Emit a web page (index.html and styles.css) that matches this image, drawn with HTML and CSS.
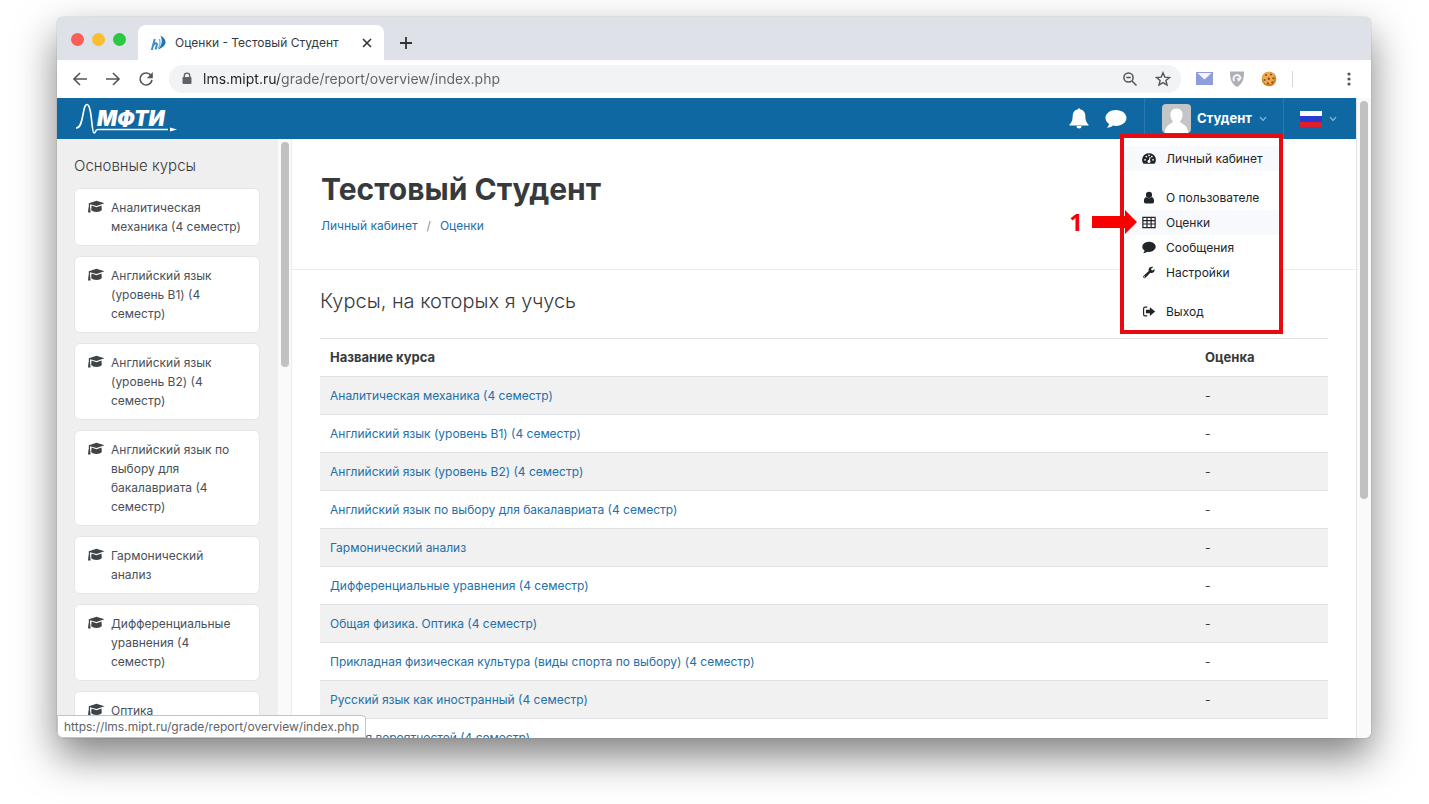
FILE: index.html
```html
<!DOCTYPE html>
<html lang="ru">
<head>
    <meta charset="UTF-8">
    <meta name="viewport" content="width=device-width, initial-scale=1.0">
    <title>Оценки - Тестовый Студент</title>
    <link rel="stylesheet" href="styles.css">
</head>
<body>
    <svg width="0" height="0" class="sprite" aria-hidden="true">
        <symbol id="cap" viewBox="0 0 18 14">
            <path d="M9.500.8 17.500 3.200 9.500 6 3 4.200V8H1.800V3.200z"/>
            <path d="M4.500 5.500 9.500 7.200l5-1.700.3 4.500c-1.500 2.500-9 2.500-10.600 0z"/>
            <path d="M1.500 7.500h1.600l.5 5H1z"/>
        </symbol>
        <symbol id="comment" viewBox="0 0 22 20">
            <path d="M11 1C5.200 1 .5 4.500.5 9c0 2.500 1.400 4.600 3.600 6.100-.3 1.500-1.100 2.700-2.300 3.700 2.400.1 4.700-.8 6.300-2.200.9.2 1.900.3 2.900.3 5.800 0 10.500-3.500 10.500-7.900S16.800 1 11 1z"/>
        </symbol>
        <symbol id="chevron" viewBox="0 0 8 6">
            <path d="M1 1l3 3.500L7 1" fill="none" stroke="currentColor" stroke-width="1.400"/>
        </symbol>
    </svg>

    <div class="window">
        <div class="tab-strip">
            <div class="lights">
                <span class="light light-red"></span>
                <span class="light light-yellow"></span>
                <span class="light light-green"></span>
            </div>
            <div class="tab">
                <svg class="favicon" viewBox="0 0 16 16" aria-hidden="true">
                    <path d="M4.800 4 1.800 15M3 10.500C5 7.500 7.500 7.500 6.800 10L5.600 14.500" fill="none" stroke="#3e8ec4" stroke-width="2"/>
                    <path d="M10.500.5c3 1.500 5.500 4.500 5 7.500-.6 3-3.500 5-7.500 6.500C12 10 12.800 6 10.500.5z" fill="#2274ae"/>
                    <path d="M9.300 4c1.300 3.500.8 6.500-1.200 9.500" fill="none" stroke="#7db9dc" stroke-width="1.500"/>
                </svg>
                <span class="tab-title">Оценки - Тестовый Студент</span>
                <button class="icon-button" aria-label="Закрыть вкладку">
                    <svg width="10" height="10" viewBox="0 0 10 10"><path d="M1 1l8 8M9 1L1 9" stroke="#333" stroke-width="1.600"/></svg>
                </button>
            </div>
            <button class="icon-button new-tab" aria-label="Новая вкладка">
                <svg width="14" height="14" viewBox="0 0 14 14"><path d="M7 1v12M1 7h12" stroke="#333" stroke-width="1.800"/></svg>
            </button>
        </div>

        <div class="toolbar">
            <div class="nav-buttons">
                <button class="icon-button" aria-label="Назад">
                    <svg width="16" height="14" viewBox="0 0 16 14"><path d="M15 7H2M8 1L2 7l6 6" fill="none" stroke="#555" stroke-width="1.600"/></svg>
                </button>
                <button class="icon-button" aria-label="Вперёд">
                    <svg width="16" height="14" viewBox="0 0 16 14"><path d="M1 7h13M8 1l6 6-6 6" fill="none" stroke="#555" stroke-width="1.600"/></svg>
                </button>
                <button class="icon-button" aria-label="Обновить">
                    <svg width="16" height="16" viewBox="0 0 16 16"><path d="M13 4.500A6 6 0 1 0 14 9" fill="none" stroke="#555" stroke-width="1.600"/><path d="M14.800 1v6.200H8.800z" fill="#555"/></svg>
                </button>
            </div>
            <div class="address">
                <svg width="10" height="13" viewBox="0 0 10 13"><path d="M2.300 6V3.800a2.700 2.700 0 0 1 5.400 0V6" fill="none" stroke="#5f6368" stroke-width="1.400"/><rect x=".5" y="5" width="9" height="7" rx="1" fill="#5f6368"/></svg>
                <input class="url" type="text" aria-label="Адрес" value="lms.mipt.ru/grade/report/overview/index.php">
                <button class="icon-button" aria-label="Масштаб">
                    <svg width="16" height="16" viewBox="0 0 16 16" fill="none" stroke="#555" stroke-width="1.500"><circle cx="6.500" cy="6.500" r="4.600"/><path d="M10 10l4.500 4.500M4.300 6.500h4.400"/></svg>
                </button>
                <button class="icon-button" aria-label="В закладки">
                    <svg width="16" height="16" viewBox="0 0 16 16"><path d="M8 1.800l1.800 4.300 4.700.4-3.600 3 1.100 4.600L8 11.600l-4 2.500 1.100-4.600-3.600-3 4.700-.4z" fill="none" stroke="#555" stroke-width="1.400"/></svg>
                </button>
            </div>
            <div class="extensions">
                <svg width="17" height="13" viewBox="0 0 17 13"><rect width="17" height="13" fill="#8f9edb"/><path d="M1.500 1h14l-7 6.500z" fill="#f4f6ff"/></svg>
                <svg width="16" height="16" viewBox="0 0 16 16"><path d="M1 .5h14c.2 7.500-1.500 12.500-7 15.500C2.500 13 .8 8 1 .5z" fill="#adb0b9"/><path d="M5.500 10A3.500 3.500 0 1 1 11.500 7.500" fill="none" stroke="#f3f4f6" stroke-width="2"/><path d="M7.500 7h5.200L9.500 11z" fill="#f3f4f6"/></svg>
                <svg width="16" height="16" viewBox="0 0 16 16"><circle cx="8" cy="8" r="7.300" fill="#d0802b"/><circle cx="7.500" cy="7" r="6.200" fill="#eda94c"/><g fill="#8a4e1d"><circle cx="5" cy="4" r="1"/><circle cx="10" cy="3.600" r="1"/><circle cx="12.300" cy="7.300" r="1.100"/><circle cx="7.800" cy="7.800" r="1.200"/><circle cx="3.600" cy="9" r="1.100"/><circle cx="7" cy="12.300" r="1.100"/><circle cx="11.300" cy="11.300" r="1.100"/></g></svg>
            </div>
            <button class="icon-button" aria-label="Меню браузера">
                <svg width="4" height="14" viewBox="0 0 4 14" fill="#555"><circle cx="2" cy="2" r="1.600"/><circle cx="2" cy="7" r="1.600"/><circle cx="2" cy="12" r="1.600"/></svg>
            </button>
        </div>

        <div class="viewport">
            <div class="page">
                <header class="navbar">
                    <a href="#" class="logo" aria-label="МФТИ">
                        <svg width="104" height="34" viewBox="0 0 104 34">
                            <path d="M0 26C8 27 6 2.500 11 2.500S15.500 31 18 31s.5-3.500 4-3.500h70" fill="none" stroke="#fff" stroke-width="1.600"/>
                            <path d="M94 25.500l7 2-7 2z" fill="#fff"/>
                            <text x="21" y="24" class="logo-text">МФТИ</text>
                        </svg>
                    </a>
                    <div class="nav-icons">
                        <button class="icon-button" aria-label="Уведомления">
                            <svg width="20" height="22" viewBox="0 0 20 22" fill="#fff"><path d="M9 1.300a1 1 0 0 1 2 0c3.500.7 5.200 3.200 5.300 6.200.1 4.500.7 6.800 3.200 9v1H.5v-1c2.500-2.200 3.100-4.500 3.200-9C3.800 4.500 5.500 2 9 1.300z"/><path d="M7.500 18h5a2.500 2.500 0 0 1-5 0z"/></svg>
                        </button>
                        <button class="icon-button" aria-label="Сообщения">
                            <svg width="22" height="20" fill="#fff"><use href="#comment"/></svg>
                        </button>
                    </div>
                    <div class="user">
                        <button class="user-button">
                            <svg class="avatar" width="29" height="29" viewBox="0 0 29 29"><rect width="29" height="29" rx="4" fill="#c4c5c6"/><path d="M14.500 4.500c4.500 0 6.500 3.500 6 7.500-.3 2.500-1.500 4.500-2.500 5.500.5 2.500 7.500 2 8.500 11.500h-24c1-9.500 8-9 8.500-11.500-1-1-2.200-3-2.500-5.500-.5-4 1.500-7.500 6-7.500z" fill="#fff"/></svg>
                            <span>Студент</span>
                            <svg class="chevron" width="8" height="6"><use href="#chevron"/></svg>
                        </button>
                        <ul class="menu">
                            <li><a href="#" class="current">
                                <svg viewBox="0 0 16 14"><path d="M8 1a7.500 7.500 0 0 0-6.300 12h12.600A7.500 7.500 0 0 0 8 1z"/><g fill="#fff"><circle cx="3.500" cy="8.500" r="1"/><circle cx="5" cy="4.800" r="1"/><circle cx="8" cy="3.300" r="1"/><circle cx="11.200" cy="4.800" r="1"/><circle cx="12.600" cy="8.500" r="1"/></g><path d="M8 10.500 9.300 5.500" stroke="#fff" stroke-width="1.200"/><circle cx="8" cy="10.500" r="1.700" fill="#fff"/></svg>
                                Личный кабинет</a></li>
                            <li class="divided"><a href="#">
                                <svg viewBox="0 0 16 14"><circle cx="8" cy="4" r="3.500"/><path d="M4.800 6.300C2.600 7 2.200 9 2.200 11.500c0 1.400.8 2.300 2.200 2.300h7.200c1.400 0 2.200-.9 2.200-2.300 0-2.500-.4-4.500-2.600-5.200-2 2-4.400 2-6.400 0z"/></svg>
                                О пользователе</a></li>
                            <li><a href="#" class="current">
                                <svg viewBox="0 0 16 14"><path d="M1 1.200h14v11.600H1zM1 4.900h14M1 8.700h14M5.700 1v12M10.400 1v12" class="line"/></svg>
                                Оценки</a></li>
                            <li><a href="#">
                                <svg viewBox="0 0 22 20"><use href="#comment"/></svg>
                                Сообщения</a></li>
                            <li><a href="#">
                                <svg viewBox="0 0 16 14"><path d="M14.500 3.200 12 4.700 10.600 4 10.500 2.400 13 .8C11 0 8.200 1 7.600 3.200c-.2.7-.1 1.400.1 2L1.600 11c-1 1.600.8 3.300 2.200 2.200L9.500 7.300c2.800.9 5.400-1.300 5-4.100zM2.800 12.700a.7.7 0 1 1 .1-1.400.7.7 0 0 1-.1 1.400z"/></svg>
                                Настройки</a></li>
                            <li class="divided"><a href="#">
                                <svg viewBox="0 0 16 14"><path d="M6 2H3.500Q1.800 2 1.800 4v6q0 2 1.700 2H6" class="line"/><path d="M4.500 5h4.500V2l6 5-6 5V9H4.500z"/></svg>
                                Выход</a></li>
                        </ul>
                        <div class="callout">
                            <span>1</span>
                            <svg width="46" height="24" viewBox="0 0 46 24" fill="#f90000"><path d="M0 6h33V0l12 12-12 12v-6H0z"/></svg>
                        </div>
                    </div>
                    <button class="language" aria-label="Русский">
                        <svg width="22" height="16" viewBox="0 0 22 16"><rect width="22" height="16" fill="#fff"/><rect y="5" width="22" height="6" fill="#2b3bd0"/><rect y="11" width="22" height="5" fill="#dd1f2c"/></svg>
                        <svg class="chevron" width="8" height="6"><use href="#chevron"/></svg>
                    </button>
                </header>

                <div class="columns">
                    <aside class="sidebar">
                        <h2>Основные курсы</h2>
                        <nav class="course-list">
                            <a href="#" class="course"><svg><use href="#cap"/></svg><span>Аналитическая механика (4 семестр)</span></a>
                            <a href="#" class="course"><svg><use href="#cap"/></svg><span>Английский язык (уровень B1) (4 семестр)</span></a>
                            <a href="#" class="course"><svg><use href="#cap"/></svg><span>Английский язык (уровень B2) (4 семестр)</span></a>
                            <a href="#" class="course"><svg><use href="#cap"/></svg><span>Английский язык по выбору для бакалавриата (4 семестр)</span></a>
                            <a href="#" class="course"><svg><use href="#cap"/></svg><span>Гармонический анализ</span></a>
                            <a href="#" class="course"><svg><use href="#cap"/></svg><span>Дифференциальные уравнения (4 семестр)</span></a>
                            <a href="#" class="course"><svg><use href="#cap"/></svg><span>Оптика</span></a>
                        </nav>
                    </aside>
                    <div class="scrollbar"><div class="thumb thumb-side"></div></div>

                    <main class="main">
                        <div class="page-header">
                            <h1>Тестовый Студент</h1>
                            <nav class="breadcrumb">
                                <a href="#">Личный кабинет</a>
                                <span>/</span>
                                <a href="#">Оценки</a>
                            </nav>
                        </div>
                        <section class="report">
                            <h2>Курсы, на которых я учусь</h2>
                            <table>
                                <thead>
                                    <tr><th>Название курса</th><th class="grade">Оценка</th></tr>
                                </thead>
                                <tbody>
                                    <tr><td><a href="#">Аналитическая механика (4 семестр)</a></td><td>-</td></tr>
                                    <tr><td><a href="#">Английский язык (уровень B1) (4 семестр)</a></td><td>-</td></tr>
                                    <tr><td><a href="#">Английский язык (уровень B2) (4 семестр)</a></td><td>-</td></tr>
                                    <tr><td><a href="#">Английский язык по выбору для бакалавриата (4 семестр)</a></td><td>-</td></tr>
                                    <tr><td><a href="#">Гармонический анализ</a></td><td>-</td></tr>
                                    <tr><td><a href="#">Дифференциальные уравнения (4 семестр)</a></td><td>-</td></tr>
                                    <tr><td><a href="#">Общая физика. Оптика (4 семестр)</a></td><td>-</td></tr>
                                    <tr><td><a href="#">Прикладная физическая культура (виды спорта по выбору) (4 семестр)</a></td><td>-</td></tr>
                                    <tr><td><a href="#">Русский язык как иностранный (4 семестр)</a></td><td>-</td></tr>
                                    <tr><td><a href="#">Теория вероятностей (4 семестр)</a></td><td></td></tr>
                                </tbody>
                            </table>
                        </section>
                    </main>
                </div>
            </div>
            <div class="scrollbar scrollbar-page"><div class="thumb thumb-page"></div></div>
            <div class="status">https://lms.mipt.ru/grade/report/overview/index.php</div>
        </div>
    </div>
</body>
</html>
```
FILE: styles.css
```css
* {
    margin: 0;
    padding: 0;
    box-sizing: border-box;
}

:root {
    --primary-color: #0f68a2;
    --link-color: #2270a8;
    --text-color: #373a3c;
    --border-color: #dee2e6;
    --mark-color: #e90a0f;
}

body {
    height: 100vh;
    padding: 17px 58px 66px 57px;
    background: white;
    color: var(--text-color);
    font-family: Inter, "Liberation Sans", sans-serif;
    font-size: 12px;
    line-height: 19px;
    overflow: hidden;
}

a {
    color: var(--link-color);
    text-decoration: none;
}

button {
    border: none;
    background: none;
    color: inherit;
    font: inherit;
    cursor: pointer;
}

.sprite {
    position: absolute;
}

.icon-button {
    display: flex;
    align-items: center;
    justify-content: center;
}

/* Browser window */
.window {
    display: flex;
    flex-direction: column;
    height: 100%;
    border-radius: 6px;
    background: white;
    box-shadow: 0 0 1px rgba(0, 0, 0, 0.5), 0 18px 40px rgba(0, 0, 0, 0.5);
}

.tab-strip {
    display: flex;
    height: 43px;
    padding-left: 14px;
    background: #dee1e7;
    border-radius: 6px 6px 0 0;
}

.lights {
    display: flex;
    gap: 8px;
    padding: 16px 12px 0 0;
}

.light {
    width: 13px;
    height: 13px;
    border-radius: 50%;
}

.light-red {
    background: #f95f57;
}

.light-yellow {
    background: #fbbe2e;
}

.light-green {
    background: #29c941;
}

.tab {
    display: flex;
    align-items: center;
    width: 246px;
    margin-top: 8px;
    padding: 0 12px;
    background: white;
    border-radius: 8px 8px 0 0;
}

.favicon {
    width: 16px;
    height: 16px;
    margin-right: 9px;
}

.tab-title {
    flex: 1;
    white-space: nowrap;
}

.new-tab {
    padding: 8px 15px 0;
}

.toolbar {
    display: flex;
    align-items: center;
    height: 38px;
    padding: 0 20px 1px 15px;
}

.nav-buttons {
    display: flex;
    gap: 17px;
    margin-right: 15px;
}

.address {
    display: flex;
    flex: 1;
    align-items: center;
    gap: 17px;
    height: 28px;
    padding: 0 10px 0 13px;
    background: #f1f3f4;
    border-radius: 14px;
}

/* host is darker than the rest of the address */
.url {
    flex: 1;
    height: 24px;
    margin-left: -6px;
    border: none;
    outline: none;
    background: linear-gradient(to right, #202124 76px, #5f6368 76px);
    background-clip: text;
    color: transparent;
    font: 14px Inter, "Liberation Sans", sans-serif;
}

.extensions {
    display: flex;
    align-items: center;
    gap: 16px;
    height: 16px;
    margin: 0 54px 0 15px;
    padding-right: 15px;
    border-right: 1px solid #d4d6d9;
}

.viewport {
    position: relative;
    display: flex;
    flex: 1;
    min-height: 0;
    overflow: hidden;
    border-radius: 0 0 6px 6px;
}

.page {
    display: flex;
    flex: 1;
    flex-direction: column;
    min-width: 0;
}

/* Navbar */
.navbar {
    display: flex;
    height: 41px;
    padding-left: 19px;
    background: var(--primary-color);
    color: white;
}

.logo {
    display: flex;
    align-items: center;
    margin-right: auto;
}

.logo-text {
    fill: white;
    font: italic 900 21px Inter, "Liberation Sans", sans-serif;
}

.nav-icons {
    display: flex;
    gap: 16px;
    padding-right: 17px;
}

.user {
    position: relative;
    width: 140px;
    border-left: 1px solid #2a7aaf;
    border-right: 1px solid #2a7aaf;
}

.user-button {
    display: flex;
    align-items: center;
    width: 100%;
    height: 100%;
    padding-left: 17px;
    font-size: 13px;
    font-weight: 700;
}

.avatar {
    margin-right: 6px;
}

.chevron {
    margin-left: 7px;
    color: #7fb0d0;
}

.language {
    display: flex;
    align-items: center;
    width: 72px;
    padding-left: 16px;
}

.menu {
    position: absolute;
    top: 36px;
    right: 0;
    z-index: 2;
    width: 163px;
    padding: 8px 0 6px;
    border: 4px solid var(--mark-color);
    background: white;
    list-style: none;
}

.menu a {
    display: flex;
    align-items: center;
    gap: 10px;
    height: 25px;
    padding-left: 18px;
    color: #212529;
    white-space: nowrap;
}

.menu a.current {
    background: #f8f9fc;
}

.menu svg {
    width: 14px;
    height: 13px;
    fill: #212529;
}

.menu .line {
    fill: none;
    stroke: #212529;
    stroke-width: 1.4;
}

.menu .divided {
    margin-top: 14px;
}

/* Numbered pointer to the menu item */
.callout {
    position: absolute;
    top: 112px;
    right: 145px;
    z-index: 3;
    display: flex;
    align-items: center;
    gap: 9px;
    color: #f90000;
    font: 700 24px/24px "Open Sans", sans-serif;
}

/* Sidebar */
.columns {
    display: flex;
    flex: 1;
    min-height: 0;
}

.sidebar {
    width: 221px;
    padding: 17px 18px 0 17px;
    background: #efefef;
    overflow: hidden;
}

.sidebar h2 {
    margin-bottom: 12px;
    font-size: 15px;
    font-weight: 300;
    line-height: 20px;
}

.course-list {
    display: flex;
    flex-direction: column;
    gap: 10px;
}

.course {
    display: flex;
    gap: 6px;
    padding: 9px 14px 9px 12px;
    border: 1px solid #e6e6e6;
    border-radius: 6px;
    background: white;
    color: #495057;
}

.course svg {
    flex: none;
    width: 18px;
    height: 14px;
    margin-top: 2px;
    fill: #3f4448;
}

.scrollbar {
    width: 14px;
    padding: 3px;
    border-right: 1px solid #ececec;
    background: #fafafa;
}

.scrollbar-page {
    width: 15px;
    border-right: none;
    border-left: 1px solid #e4e4e4;
}

.thumb {
    width: 8px;
    border-radius: 4px;
    background: #c1c1c1;
}

.thumb-side {
    height: 225px;
}

.thumb-page {
    height: 398px;
}

/* Main content */
.main {
    flex: 1;
    min-width: 0;
    overflow: hidden;
}

.page-header {
    height: 131px;
    padding: 30px 29px 0;
    border-bottom: 1px solid #e9ecef;
}

.page-header h1 {
    margin-bottom: 7px;
    font-size: 30px;
    line-height: 40px;
}

.breadcrumb {
    display: flex;
    gap: 9px;
}

.breadcrumb span {
    color: #868e96;
}

.report {
    padding: 18px 28px 0;
}

.report h2 {
    margin-bottom: 24px;
    font-size: 20px;
    font-weight: 300;
    line-height: 26px;
}

table {
    width: 100%;
    border-collapse: collapse;
}

th, td {
    height: 38px;
    padding: 0 10px;
    border-top: 1px solid var(--border-color);
    text-align: left;
    white-space: nowrap;
}

th {
    font-size: 13px;
}

.grade {
    width: 133px;
}

tbody tr:nth-child(odd) {
    background: #f1f1f1;
}

/* Link preview */
.status {
    position: absolute;
    bottom: 0;
    left: 0;
    padding: 1px 6px;
    border: 1px solid #c4c4c4;
    border-radius: 0 4px 0 6px;
    background: white;
    color: #5f6368;
}
```
